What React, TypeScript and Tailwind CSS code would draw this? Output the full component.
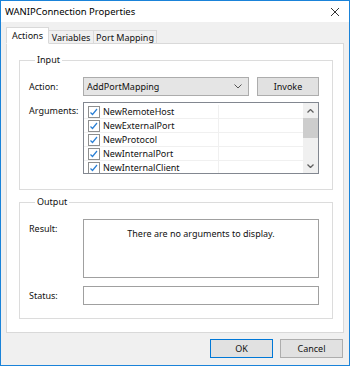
import { useState } from "react";

const args = [
    "NewRemoteHost",
    "NewExternalPort",
    "NewProtocol",
    "NewInternalPort",
    "NewInternalClient",
];

const Check = () => (
    <svg width="12" height="12" viewBox="0 0 12 12" className="shrink-0">
        <rect x="0.5" y="0.5" width="11" height="11" fill="#fff" stroke="#8e8f8f" />
        <path d="M2.5 6.5 L4.5 8.5 L9 3" fill="none" stroke="#2a7fd4" strokeWidth="1.2" />
    </svg>
);

const App = () => {
    const [tab, setTab] = useState("Actions");
    const tabs = [
        { name: "Actions", w: "w-[43px]" },
        { name: "Variables", w: "w-[45px]" },
        { name: "Port Mapping", w: "w-[63px]" },
    ];

    return (
        <div className="w-[350px] h-[366px] border border-[#1a83d9] bg-[#f0f0f0] flex flex-col font-['Segoe_UI','Noto_Sans',sans-serif] text-[9px] text-[#111] leading-none">
            {/* title bar */}
            <div className="h-[21px] bg-white flex items-center justify-between pl-[4px] pr-[9px] shrink-0">
                <span className="text-[9.5px] text-black">WANIPConnection Properties</span>
                <svg width="10" height="10" viewBox="0 0 10 10">
                    <path d="M1 1 L9 9 M9 1 L1 9" stroke="#333" strokeWidth="1" />
                </svg>
            </div>

            <div className="flex flex-col px-[5px] pt-[5px] grow">
                {/* tabs */}
                <div className="flex items-end h-[17px] -mb-px relative z-10">
                    {tabs.map((t) => (
                        <button
                            key={t.name}
                            onClick={() => setTab(t.name)}
                            className={`${t.w} whitespace-nowrap flex items-center justify-center border border-[#d9d9d9] ${tab === t.name
                                ? "h-[17px] bg-white border-b-white"
                                : "h-[14px] bg-[#f0f0f0] border-l-0"
                                }`}
                        >
                            {t.name}
                        </button>
                    ))}
                </div>

                {/* tab page */}
                <div className="w-[338px] h-[290px] bg-white border border-[#d9d9d9] pt-[8px] pl-[12px] pr-[10px] flex flex-col">
                    <fieldset className="border border-[#dcdcdc] pl-[9px] pr-[13px] pb-[15px]">
                        <legend className="ml-[6px] px-[2px] h-[16px] leading-[16px]">Input</legend>
                        <div className="flex items-center mt-[9px] h-[19px]">
                            <span className="w-[54px]">Action:</span>
                            <div className="w-[166px] h-[19px] bg-[#e5e5e5] border border-[#acacac] flex items-center justify-between pl-[3px] pr-[6px]">
                                <span>AddPortMapping</span>
                                <svg width="8" height="5" viewBox="0 0 8 5">
                                    <path d="M0.5 0.5 L4 4 L7.5 0.5" fill="none" stroke="#555" />
                                </svg>
                            </div>
                            <button className="ml-[8px] w-[62px] h-[19px] bg-[#e1e1e1] border border-[#adadad]">Invoke</button>
                        </div>
                        <div className="flex mt-[6px]">
                            <span className="w-[54px] pt-[4px]">Arguments:</span>
                            <div className="w-[236px] h-[72px] border border-[#828790] flex overflow-hidden">
                                <div className="grow flex flex-col pt-[2px]">
                                    {args.map((a) => (
                                        <div key={a} className="h-[14px] flex shrink-0 border-b border-[#f0f0f0]">
                                            <div className="w-[135px] flex items-center gap-[3px] pl-[4px] border-r border-[#f0f0f0]">
                                                <Check />
                                                <span>{a}</span>
                                            </div>
                                        </div>
                                    ))}
                                </div>
                                <div className="w-[15px] bg-[#f0f0f0] flex flex-col items-center">
                                    <div className="h-[15px] flex items-center justify-center">
                                        <svg width="7" height="4" viewBox="0 0 7 4">
                                            <path d="M0.5 3.5 L3.5 0.5 L6.5 3.5" fill="none" stroke="#606060" strokeWidth="1.3" />
                                        </svg>
                                    </div>
                                    <div className="w-[15px] h-[20px] bg-[#cdcdcd]" />
                                    <div className="grow" />
                                    <div className="h-[15px] flex items-center justify-center">
                                        <svg width="7" height="4" viewBox="0 0 7 4">
                                            <path d="M0.5 0.5 L3.5 3.5 L6.5 0.5" fill="none" stroke="#606060" strokeWidth="1.3" />
                                        </svg>
                                    </div>
                                </div>
                            </div>
                        </div>
                    </fieldset>

                    <fieldset className="border border-[#dcdcdc] pl-[9px] pr-[13px] pb-[13px] mt-[4px]">
                        <legend className="ml-[6px] px-[2px] h-[16px] leading-[16px]">Output</legend>
                        <div className="flex mt-[9px]">
                            <span className="w-[54px] pt-[5px]">Result:</span>
                            <div className="w-[236px] h-[59px] border border-[#a0a0a0] flex justify-center pt-[9px]">
                                There are no arguments to display.
                            </div>
                        </div>
                        <div className="flex items-center mt-[8px]">
                            <span className="w-[54px]">Status:</span>
                            <div className="w-[236px] h-[19px] border border-[#a0a0a0]" />
                        </div>
                    </fieldset>
                </div>

                {/* footer */}
                <div className="flex justify-end gap-[7px] mt-[6px] pr-px">
                    <button className="w-[63px] h-[19px] bg-[#e1e1e1] border border-[#0078d7]">OK</button>
                    <button className="w-[63px] h-[19px] bg-[#e1e1e1] border border-[#adadad]">Cancel</button>
                </div>
            </div>
        </div>
    );
};

export default App;
